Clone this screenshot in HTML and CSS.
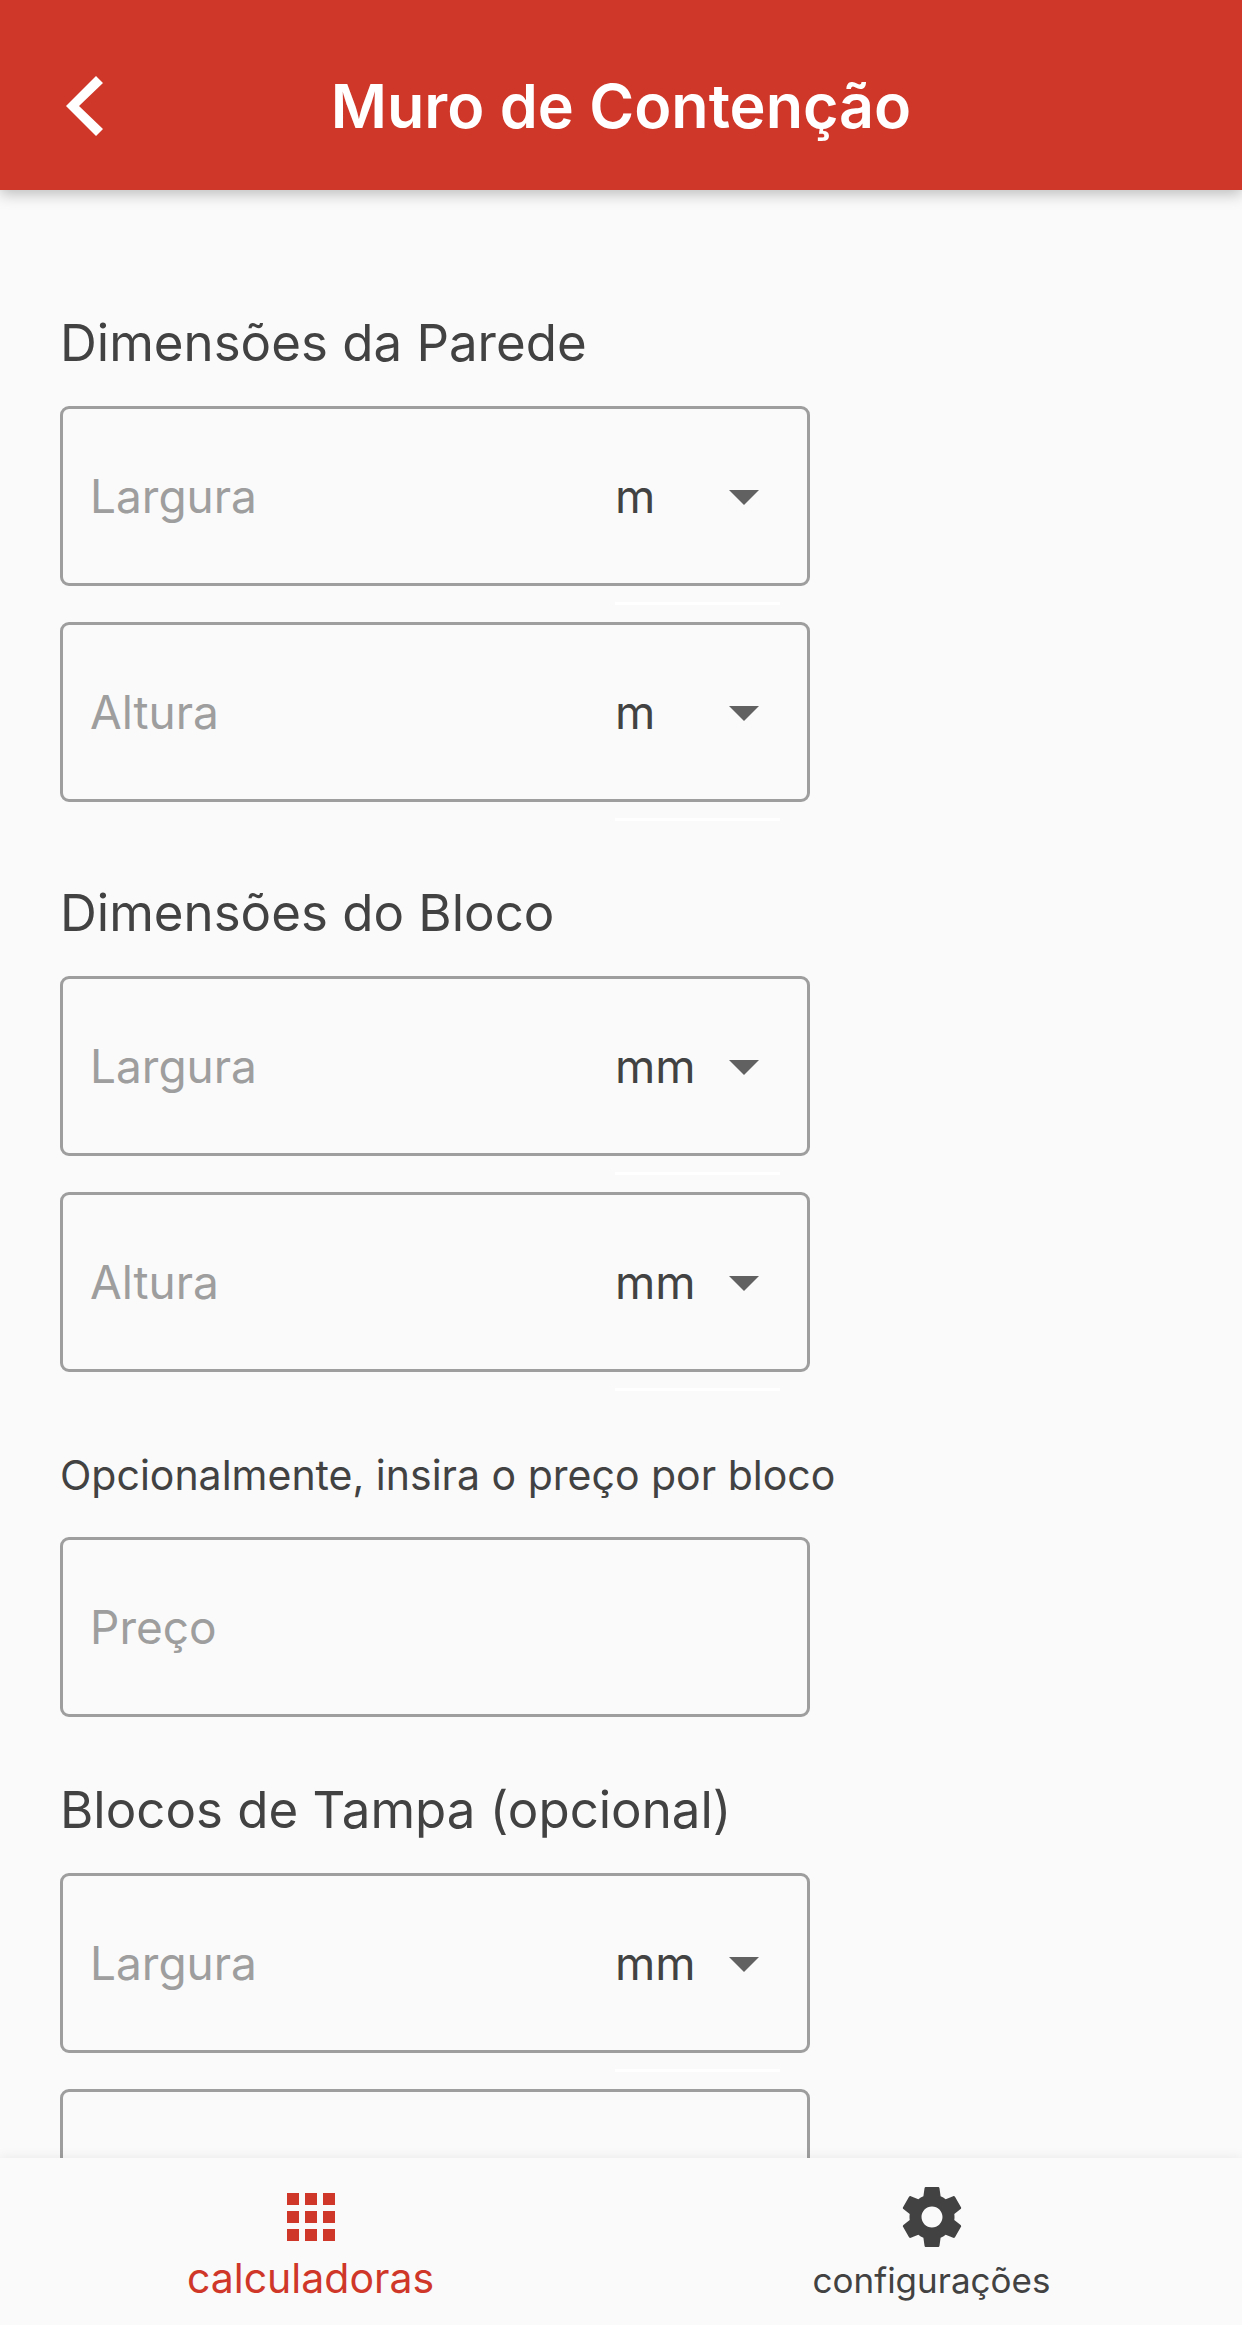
FILE: index.html
```html
<!DOCTYPE html>
<html lang="pt-BR">
<head>
    <meta charset="UTF-8">
    <meta name="viewport" content="width=device-width, initial-scale=1.0">
    <title>Muro de Contenção</title>
    <link rel="stylesheet" href="styles.css">
</head>
<body>
    <header class="app-bar">
        <button type="button" class="back-button" aria-label="Voltar">
            <svg width="38" height="60" viewBox="0 0 38 60">
                <path d="M31 0 38 7 14 30 38 53 31 60 1 30z" fill="#fff"/>
            </svg>
        </button>
        <h1>Muro de Contenção</h1>
    </header>

    <main class="content">
        <form>
            <section class="group">
                <h2>Dimensões da Parede</h2>
                <div class="field">
                    <input type="text" inputmode="decimal" placeholder="Largura" aria-label="Largura da parede">
                    <div class="unit">
                        <select aria-label="Unidade da largura da parede">
                            <option selected>m</option>
                            <option>mm</option>
                        </select>
                    </div>
                </div>
                <div class="field">
                    <input type="text" inputmode="decimal" placeholder="Altura" aria-label="Altura da parede">
                    <div class="unit">
                        <select aria-label="Unidade da altura da parede">
                            <option selected>m</option>
                            <option>mm</option>
                        </select>
                    </div>
                </div>
            </section>

            <section class="group">
                <h2>Dimensões do Bloco</h2>
                <div class="field">
                    <input type="text" inputmode="decimal" placeholder="Largura" aria-label="Largura do bloco">
                    <div class="unit">
                        <select aria-label="Unidade da largura do bloco">
                            <option>m</option>
                            <option selected>mm</option>
                        </select>
                    </div>
                </div>
                <div class="field">
                    <input type="text" inputmode="decimal" placeholder="Altura" aria-label="Altura do bloco">
                    <div class="unit">
                        <select aria-label="Unidade da altura do bloco">
                            <option>m</option>
                            <option selected>mm</option>
                        </select>
                    </div>
                </div>
            </section>

            <section class="group">
                <label class="note" for="preco">Opcionalmente, insira o preço por bloco</label>
                <div class="field">
                    <input type="text" inputmode="decimal" id="preco" placeholder="Preço">
                </div>
            </section>

            <section class="group group-tight">
                <h2>Blocos de Tampa (opcional)</h2>
                <div class="field">
                    <input type="text" inputmode="decimal" placeholder="Largura" aria-label="Largura da tampa">
                    <div class="unit">
                        <select aria-label="Unidade da largura da tampa">
                            <option>m</option>
                            <option selected>mm</option>
                        </select>
                    </div>
                </div>
                <div class="field">
                    <input type="text" inputmode="decimal" placeholder="Altura" aria-label="Altura da tampa">
                    <div class="unit">
                        <select aria-label="Unidade da altura da tampa">
                            <option>m</option>
                            <option selected>mm</option>
                        </select>
                    </div>
                </div>
            </section>
        </form>
    </main>

    <nav class="bottom-nav">
        <a href="#calculadoras" class="active">
            <svg width="72" height="72" viewBox="0 0 24 24" fill="currentColor">
                <path d="M4 8h4V4H4v4zm6 12h4v-4h-4v4zm-6 0h4v-4H4v4zm0-6h4v-4H4v4zm6 0h4v-4h-4v4zm6-10v4h4V4h-4zm-6 4h4V4h-4v4zm6 6h4v-4h-4v4zm0 6h4v-4h-4v4z"/>
            </svg>
            <span>calculadoras</span>
        </a>
        <a href="#configuracoes">
            <svg width="72" height="72" viewBox="0 0 24 24" fill="currentColor">
                <path d="M19.43 12.98c.04-.32.07-.64.07-.98s-.03-.66-.07-.98l2.11-1.65c.19-.15.24-.42.12-.64l-2-3.46c-.12-.22-.39-.3-.61-.22l-2.49 1c-.52-.4-1.08-.73-1.69-.98l-.38-2.65C14.46 2.18 14.25 2 14 2h-4c-.25 0-.46.18-.49.42l-.38 2.65c-.61.25-1.17.59-1.69.98l-2.49-1c-.23-.09-.49 0-.61.22l-2 3.46c-.13.22-.07.49.12.64l2.11 1.65c-.04.32-.07.65-.07.98s.03.66.07.98l-2.11 1.65c-.19.15-.24.42-.12.64l2 3.46c.12.22.39.3.61.22l2.49-1c.52.4 1.08.73 1.69.98l.38 2.65c.03.24.24.42.49.42h4c.25 0 .46-.18.49-.42l.38-2.65c.61-.25 1.17-.59 1.69-.98l2.49 1c.23.09.49 0 .61-.22l2-3.46c.12-.22.07-.49-.12-.64l-2.11-1.65zM12 15.5c-1.93 0-3.5-1.57-3.5-3.5s1.57-3.5 3.5-3.5 3.5 1.57 3.5 3.5-1.57 3.5-3.5 3.5z"/>
            </svg>
            <span>configurações</span>
        </a>
    </nav>
</body>
</html>
```
FILE: styles.css
```css
* {
    box-sizing: border-box;
}
body {
    margin: 0;
    height: 100vh;
    display: flex;
    flex-direction: column;
    font-family: Inter, Roboto, sans-serif;
    color: #424242;
    background-color: #fafafa;
}
.app-bar {
    display: grid;
    grid-template-columns: 160px 1fr 160px;
    align-items: center;
    flex-shrink: 0;
    padding: 58px 0 36px;
    background-color: #cf3729;
    color: white;
    box-shadow: 0 4px 14px rgba(0,0,0,0.25);
    z-index: 1;
}
.app-bar h1 {
    margin: 0;
    font-size: 61px;
    line-height: 96px;
    font-weight: 600;
    text-align: center;
    white-space: nowrap;
}
.back-button {
    display: flex;
    padding: 18px 0 18px 65px;
    border: none;
    background: none;
    cursor: pointer;
}
.content {
    flex: 1;
    min-height: 0;
    padding: 42px 60px;
    overflow-y: auto;
    scrollbar-width: none;
}
.group {
    padding-top: 78px;
}
.group-tight {
    padding-top: 60px;
}
h2 {
    margin: 0 0 30px;
    font-size: 51px;
    line-height: 66px;
    font-weight: 400;
}
.note {
    display: block;
    margin-bottom: 36px;
    font-size: 41px;
    line-height: 51px;
}
.field {
    display: flex;
    align-items: center;
    max-width: 750px;
    height: 180px;
    padding: 0 27px;
    border: 3px solid #9e9e9e;
    border-radius: 9px;
}
.field + .field {
    margin-top: 36px;
}
.field input {
    flex: 1;
    min-width: 0;
    height: 100%;
    padding: 0;
    border: none;
    outline: none;
    background: none;
    font: inherit;
    font-size: 46px;
    color: inherit;
}
.field input::placeholder {
    color: #9e9e9e;
    opacity: 1;
}
.unit {
    position: relative;
    display: flex;
    width: 165px;
    height: 100%;
}
.unit select {
    flex: 1;
    appearance: none;
    padding: 0;
    border: none;
    background: none;
    font: inherit;
    font-size: 46px;
    color: inherit;
}
/* dropdown arrow */
.unit::before {
    content: "";
    position: absolute;
    top: 81px;
    right: 21px;
    border: 15px solid transparent;
    border-top-color: #616161;
    border-bottom: none;
    pointer-events: none;
}
/* underline below the select */
.unit::after {
    content: "";
    position: absolute;
    left: 0;
    right: 0;
    bottom: -22px;
    height: 3px;
    background-color: white;
}
.bottom-nav {
    display: flex;
    flex-shrink: 0;
    background-color: #fafafa;
    box-shadow: 0 0 12px rgba(0,0,0,0.08);
    z-index: 1;
}
.bottom-nav a {
    flex: 1;
    display: flex;
    flex-direction: column;
    align-items: center;
    padding: 23px 0 18px;
    color: #424242;
    font-size: 35px;
    line-height: 54px;
    text-decoration: none;
}
.bottom-nav .active {
    color: #cf3729;
    font-size: 41px;
    line-height: 50px;
}
```
